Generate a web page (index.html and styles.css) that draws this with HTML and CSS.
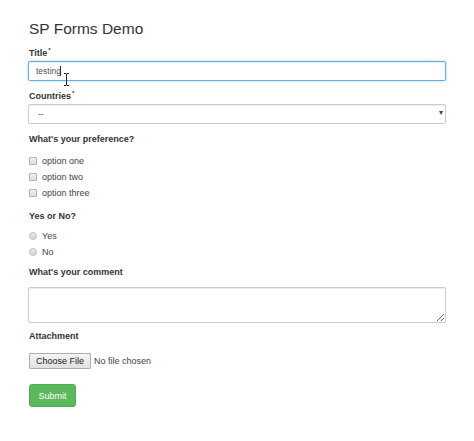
FILE: index.html
```html
<!DOCTYPE html>
<html>
<head>
<meta charset="utf-8">
<link rel="stylesheet" href="styles.css">
</head>
<body>
<div class="page">
  <h1 class="title">SP Forms Demo</h1>
  <form class="form">
    <div class="group">
      <label class="lbl">Title<sup class="req">*</sup></label>
      <div class="field-wrap">
        <input class="control focus" type="text" value="testing">
        <span class="caret"></span>
        <svg class="ibeam" width="7" height="13" viewBox="0 0 7 13"><path d="M1 0.5h2l0.5 0.6 0.5-0.6h2M3.5 1v11M1 12.5h2l0.5-0.6 0.5 0.6h2" fill="none" stroke="#222" stroke-width="1"/></svg>
      </div>
    </div>
    <div class="group">
      <label class="lbl">Countries<sup class="req">*</sup></label>
      <div class="field-wrap">
        <select class="control select"><option>--</option></select>
        <span class="arrow">▾</span>
      </div>
    </div>
    <div class="group">
      <label class="lbl">What's your preference?</label>
      <div class="choices">
        <label class="choice"><input type="checkbox" class="box"><span>option one</span></label>
        <label class="choice"><input type="checkbox" class="box"><span>option two</span></label>
        <label class="choice"><input type="checkbox" class="box"><span>option three</span></label>
      </div>
    </div>
    <div class="group">
      <label class="lbl">Yes or No?</label>
      <div class="choices choices-radio">
        <label class="choice"><input type="radio" name="yn" class="radio"><span>Yes</span></label>
        <label class="choice"><input type="radio" name="yn" class="radio"><span>No</span></label>
      </div>
    </div>
    <div class="group">
      <label class="lbl lbl-wide">What's your comment</label>
      <textarea class="control area"></textarea>
    </div>
    <div class="group">
      <label class="lbl lbl-file">Attachment</label>
      <div class="file">
        <button type="button" class="file-btn">Choose File</button>
        <span class="file-text">No file chosen</span>
      </div>
    </div>
    <button type="button" class="submit">Submit</button>
  </form>
</div>
</body>
</html>
```
FILE: styles.css
```css
* { box-sizing: border-box; }
html, body { margin: 0; padding: 0; background: #fff; }
body {
  font-family: "Liberation Sans", Arial, sans-serif;
  color: #333;
  width: 474px;
  height: 441px;
  overflow: hidden;
}
.page {
  padding: 19px 28px 0 28px;
}
.title {
  margin: 0 0 8px 1px;
  font-size: 15.5px;
  line-height: 20px;
  font-weight: normal;
  color: #333;
}
.form { display: flex; flex-direction: column; }
.group {
  display: flex;
  flex-direction: column;
  margin-bottom: 9px;
}
.lbl {
  display: block;
  font-size: 9px;
  line-height: 12px;
  font-weight: bold;
  color: #333;
  margin: 0 0 2px 1px;
}
.req {
  font-size: 6px;
  line-height: 0;
  vertical-align: 4px;
  margin-left: 1px;
}
.field-wrap { position: relative; }
.control {
  display: block;
  width: 100%;
  height: 20px;
  margin: 0;
  padding: 0 7px;
  border: 1px solid #ccc;
  border-radius: 2px;
  background: #fff;
  font-family: "Liberation Sans", Arial, sans-serif;
  font-size: 8.5px;
  color: #555;
  box-shadow: inset 0 1px 1px rgba(0,0,0,.075);
  outline: none;
}
.control.focus {
  border-color: #66afe9;
  box-shadow: inset 0 1px 1px rgba(0,0,0,.075), 0 0 3px rgba(102,175,233,.6);
}
.caret {
  position: absolute;
  left: 32px;
  top: 5px;
  width: 1px;
  height: 10px;
  background: #333;
}
.ibeam {
  position: absolute;
  left: 35px;
  top: 12px;
}
.select {
  -webkit-appearance: none;
  appearance: none;
  padding-left: 9px;
}
.arrow {
  position: absolute;
  right: 3px;
  top: 4px;
  font-size: 8px;
  line-height: 10px;
  color: #444;
}
.choices {
  display: flex;
  flex-direction: column;
  margin: 6px 0 0 0;
}
.choices-radio { margin-top: 4px; }
.choice {
  display: flex;
  align-items: center;
  height: 16px;
  font-size: 9px;
  color: #444;
}
.box, .radio {
  -webkit-appearance: none;
  appearance: none;
  width: 8px;
  height: 8px;
  margin: 0 5px 0 1px;
  border: 1px solid #b4b4b4;
  background: linear-gradient(#f0f0f0, #dcdcdc);
  flex: none;
}
.box { border-radius: 1px; }
.radio { border-radius: 50%; border-color: #bdbdbd; background: linear-gradient(#eaeaea, #d6d6d6); }
.lbl-wide { margin-top: -3px; margin-bottom: 9px; }
.area {
  height: 36px;
  resize: vertical;
  padding: 4px 7px;
}
.lbl-file { margin-top: -2px; margin-bottom: 11px; }
.file {
  display: flex;
  align-items: center;
  height: 16px;
  font-size: 9px;
}
.file-btn {
  height: 16px;
  margin: 0 3px 0 1px;
  padding: 0 6px;
  border: 1px solid #adadad;
  border-radius: 1px;
  background: linear-gradient(#f4f4f4, #e1e1e1);
  font-family: "Liberation Sans", Arial, sans-serif;
  font-size: 9px;
  color: #222;
  line-height: 14px;
}
.file-text { font-size: 9px; color: #444; }
.submit {
  align-self: flex-start;
  width: 47px;
  height: 23px;
  margin: 6px 0 0 1px;
  padding: 0;
  border: 1px solid #4cae4c;
  border-radius: 3px;
  background: #5cb85c;
  color: #fff;
  font-family: "Liberation Sans", Arial, sans-serif;
  font-size: 9px;
}
```
